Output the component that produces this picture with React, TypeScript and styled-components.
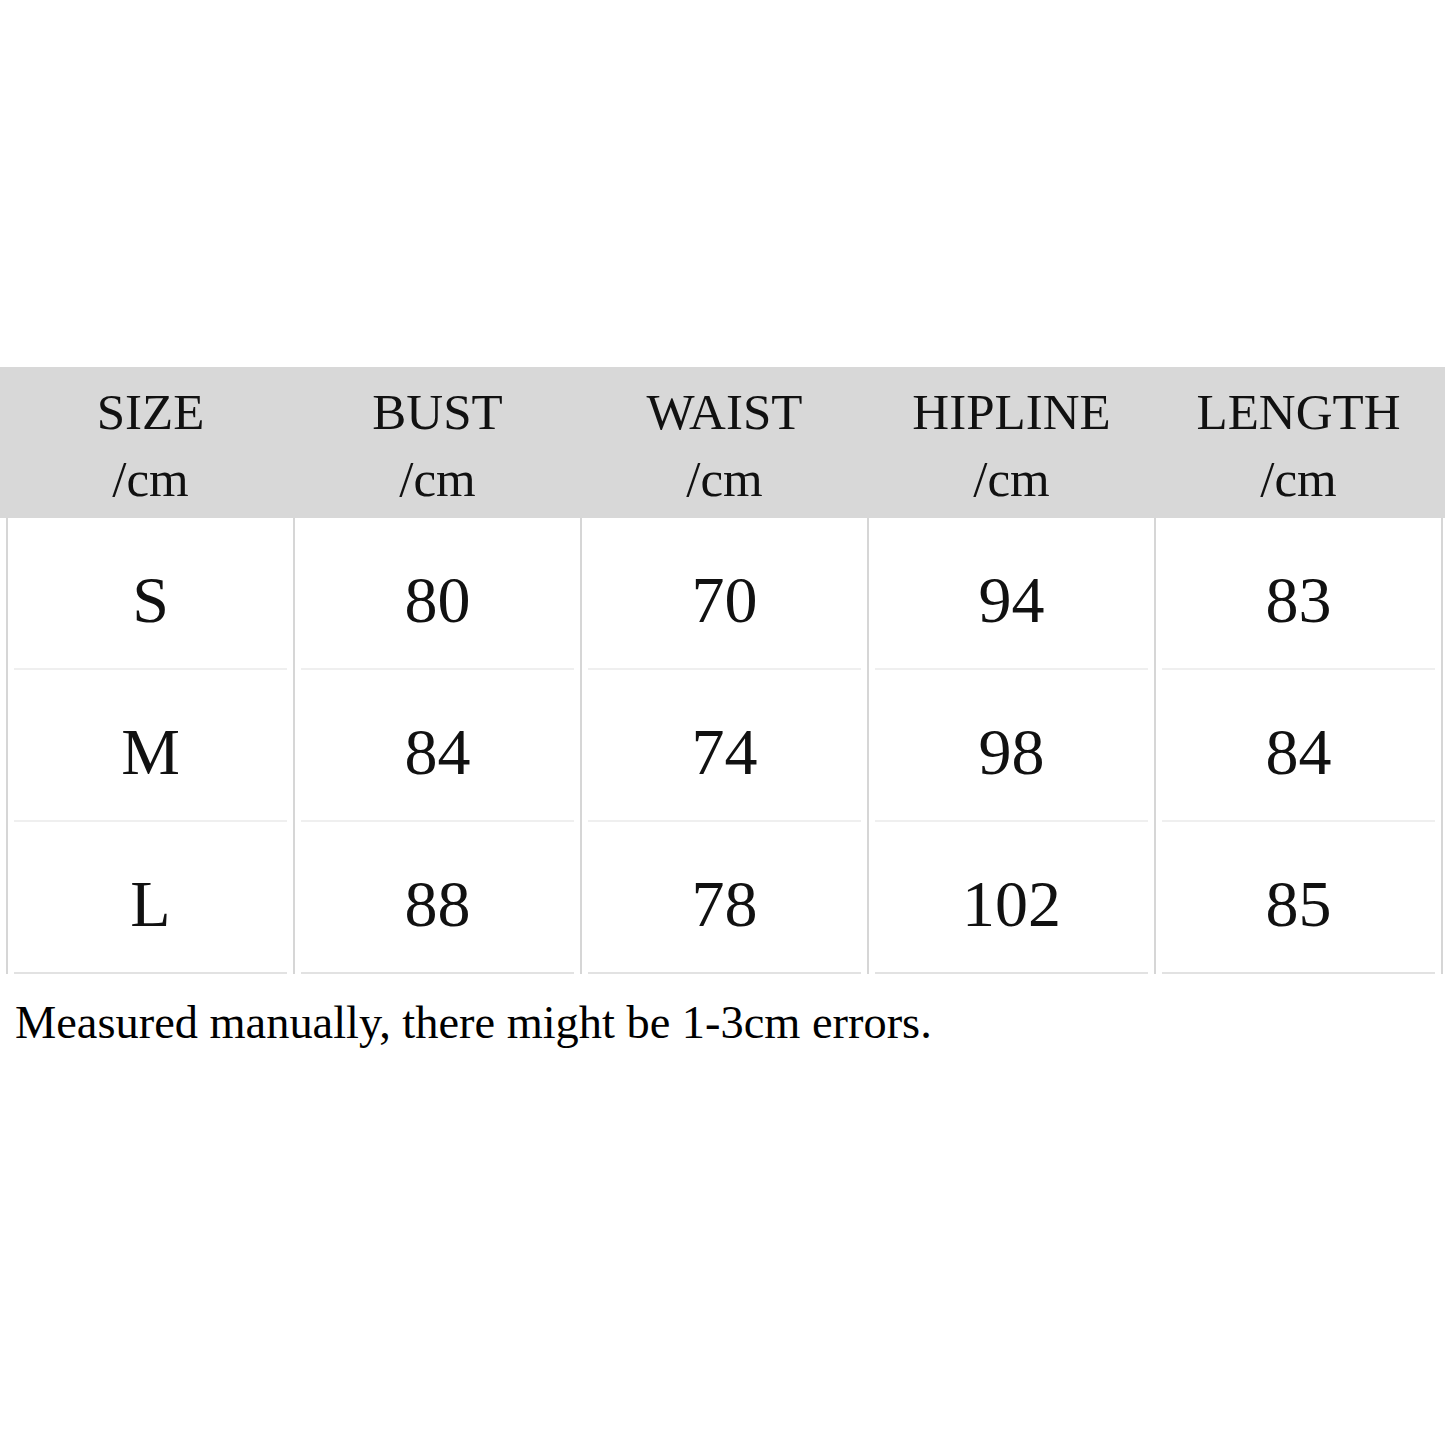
import styled, { createGlobalStyle } from 'styled-components';

const GlobalStyle = createGlobalStyle`
  html, body {
    margin: 0;
    padding: 0;
    background: #fff;
  }
  body {
    font-family: 'Liberation Serif', 'Times New Roman', serif;
    color: #111;
  }
`;

const Page = styled.div`
  width: 1445px;
  height: 1445px;
  padding-top: 367px;
  box-sizing: border-box;
`;

const HeaderRow = styled.div`
  display: grid;
  grid-template-columns: repeat(5, 287px);
  padding: 12px 0 5px 7px;
  background: #d8d8d8;
`;

const HeadCell = styled.div`
  text-align: center;
  font-size: 51px;
  line-height: 67px;
`;

const Body = styled.div`
  display: grid;
  grid-template-columns: repeat(5, 287px);
  margin-left: 6px;
  border-left: 2px solid #d6d6d6;
  width: max-content;
`;

const Cell = styled.div<{ $last: boolean }>`
  position: relative;
  height: 152px;
  box-sizing: border-box;
  border-right: 2px solid #d6d6d6;
  display: flex;
  align-items: center;
  justify-content: center;
  padding-top: 12px;
  font-size: 66px;

  &::after {
    content: '';
    position: absolute;
    left: 6px;
    right: 6px;
    bottom: 0;
    height: 2px;
    background: ${(p) => (p.$last ? '#e2e2e2' : '#efefef')};
  }
`;

const Note = styled.p`
  margin: 22px 0 0 15px;
  font-size: 46.4px;
  color: #000;
`;

const heads = ['SIZE', 'BUST', 'WAIST', 'HIPLINE', 'LENGTH'];

const rows = [
  ['S', '80', '70', '94', '83'],
  ['M', '84', '74', '98', '84'],
  ['L', '88', '78', '102', '85'],
];

const App = () => (
  <>
    <GlobalStyle />
    <Page>
      <HeaderRow>
        {heads.map((h) => (
          <HeadCell key={h}>
            {h}
            <br />
            /cm
          </HeadCell>
        ))}
      </HeaderRow>
      <Body>
        {rows.map((r, i) =>
          r.map((v, j) => (
            <Cell key={`${i}-${j}`} $last={i === rows.length - 1}>
              {v}
            </Cell>
          )),
        )}
      </Body>
      <Note>Measured manually, there might be 1-3cm errors.</Note>
    </Page>
  </>
);

export default App;
